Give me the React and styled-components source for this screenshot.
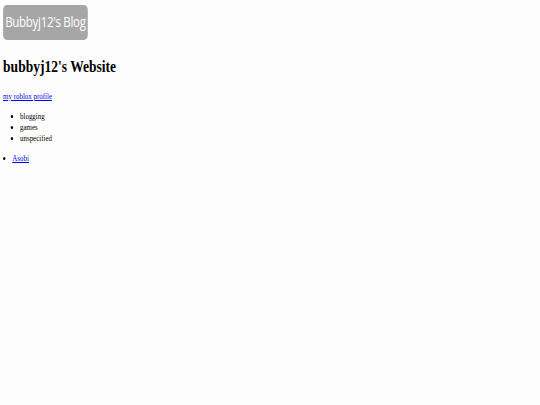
import React from "react"
import styled, { createGlobalStyle } from "styled-components"

const GlobalStyle = createGlobalStyle`
  html, body {
    margin: 0;
    background: #fdfdfd;
  }
  body {
    font-family: "Liberation Serif", "Times New Roman", serif;
    font-size: 9px;
    color: #000000;
  }
`

// the page in the shot is squeezed sideways, so the whole page is scaled
const Page = styled.div`
  padding: 5px 4px;
  transform: scaleX(0.77);
  transform-origin: left top;
  width: 700px;
`

const BlogButton = styled.a`
  display: inline-flex;
  align-items: center;
  justify-content: center;
  width: 110px;
  height: 35px;
  padding-bottom: 4px;
  box-sizing: border-box;
  background: #a6a6a6;
  border-radius: 5px;
  color: #ffffff;
  font-family: "Open Sans", "Liberation Sans", sans-serif;
  font-size: 15px;
  letter-spacing: -0.4px;
  text-decoration: none;
`

const Title = styled.h1`
  font-size: 17.6px;
  font-weight: bold;
  margin: 16px 0 14px;
`

const ProfileLink = styled.a`
  display: block;
  color: #0000ee;
  text-decoration: underline;
  margin-bottom: 10px;
`

const List = styled.ul`
  margin: 0 0 ${({ $gap }) => $gap || 0}px;
  padding-left: ${({ $indent }) => $indent}px;
  line-height: 11px;
`

const Item = styled.li`
  list-style: disc;
`

const ItemLink = styled.a`
  color: #0000ee;
  text-decoration: underline;
`

export default function App() {
  return (
    <>
      <GlobalStyle />
      <Page>
        <BlogButton href="#">Bubbyj12's Blog</BlogButton>
        <Title>bubbyj12's Website</Title>
        <ProfileLink href="#">my roblox profile</ProfileLink>
        <List $indent={22} $gap={9}>
          <Item>blogging</Item>
          <Item>games</Item>
          <Item>unspecified</Item>
        </List>
        <List $indent={12}>
          <Item>
            <ItemLink href="#">Asobi</ItemLink>
          </Item>
        </List>
      </Page>
    </>
  )
}
